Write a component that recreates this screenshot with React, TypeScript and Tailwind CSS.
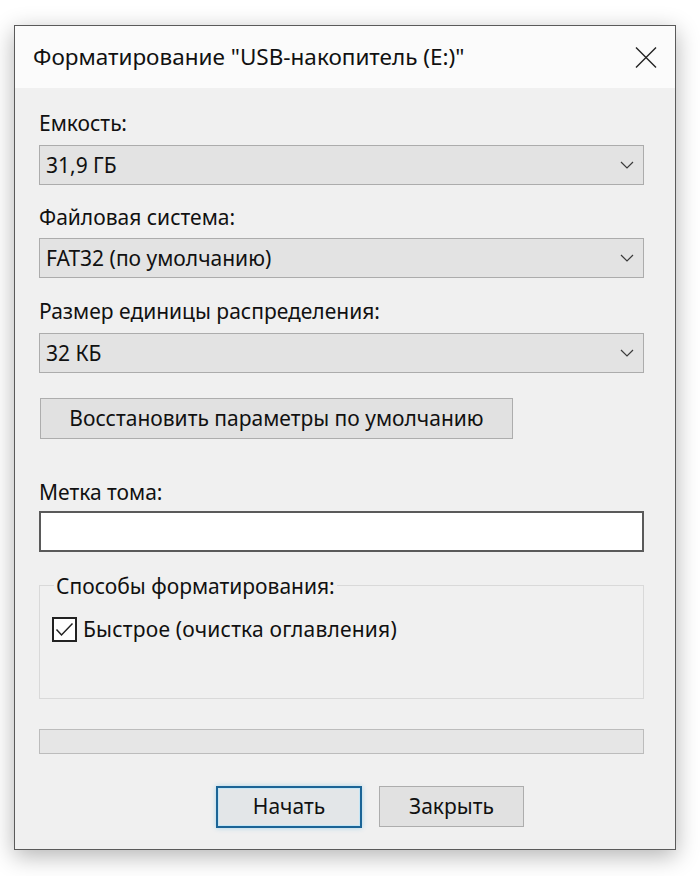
import React, { useState } from 'react';

const font = { fontFamily: '"Noto Sans", "DejaVu Sans", sans-serif' };

function Chevron() {
  return (
    <svg width="14" height="8" viewBox="0 0 14 8" fill="none">
      <path d="M1 1 L7 7 L13 1" stroke="#3a3a3a" strokeWidth="1.2" />
    </svg>
  );
}

function Combo({ value }: { value: string }) {
  return (
    <div className="h-[40px] w-full border border-[#acacac] bg-[#e3e3e3] flex items-center justify-between pl-[6px] pr-[9px]">
      <span className="text-[21px] leading-none text-[#111]">{value}</span>
      <Chevron />
    </div>
  );
}

function Label({ text, className }: { text: string; className: string }) {
  return <div className={`h-[26px] leading-[26px] text-[21px] text-[#111] ${className}`}>{text}</div>;
}

export default function App() {
  const [quick, setQuick] = useState(true);

  return (
    <div className="w-[700px] h-[876px] bg-white pt-[25px] pl-[14px]" style={font}>
      <div className="w-[662px] h-[825px] border border-[#5a5a5a] flex flex-col shadow-[0_6px_22px_rgba(0,0,0,0.3)]">
        {/* title bar */}
        <div className="h-[62px] bg-[#fbfbfb] flex items-center justify-between pl-[18px] pr-[18px]">
          <span className="text-[22.5px] text-[#111]">Форматирование "USB-накопитель (E:)"</span>
          <svg width="22" height="21" viewBox="0 0 22 21" fill="none">
            <path d="M1 0.5 L21 20.5 M21 0.5 L1 20.5" stroke="#222" strokeWidth="1.4" />
          </svg>
        </div>

        {/* body */}
        <div className="flex-1 bg-[#f0f0f0] pl-[24px] pr-[31px] flex flex-col">
          <Label text="Емкость:" className="mt-[22px]" />
          <div className="mt-[9px]"><Combo value="31,9 ГБ" /></div>

          <Label text="Файловая система:" className="mt-[19px]" />
          <div className="mt-[8px]"><Combo value="FAT32 (по умолчанию)" /></div>

          <Label text="Размер единицы распределения:" className="mt-[20px]" />
          <div className="mt-[9px]"><Combo value="32 КБ" /></div>

          <button className="mt-[25px] ml-[1px] w-[473px] h-[41px] border border-[#adadad] bg-[#e1e1e1] text-[21px] text-[#111]">
            Восстановить параметры по умолчанию
          </button>

          <Label text="Метка тома:" className="mt-[40px]" />
          <div className="mt-[6px] h-[41px] w-full border-2 border-[#5a5a5a] bg-white" />

          {/* group box */}
          <div className="relative mt-[33px] h-[114px] border border-[#d9d9d9] pt-[31px] pl-[12px]">
            <div className="absolute -top-[13px] left-[14px] bg-[#f0f0f0] px-[2px] h-[26px] leading-[26px] text-[21px] text-[#111]">
              Способы форматирования:
            </div>
            <label className="flex items-center gap-[6px] cursor-default" onClick={() => setQuick(!quick)}>
              <span className="w-[25px] h-[25px] border-2 border-[#222] bg-white flex items-center justify-center">
                {quick && (
                  <svg width="19" height="15" viewBox="0 0 19 15" fill="none">
                    <path d="M1.5 7.5 L6.5 13 L17.5 1.5" stroke="#222" strokeWidth="1.5" />
                  </svg>
                )}
              </span>
              <span className="text-[21px] leading-none text-[#111] tracking-[0.2px]">Быстрое (очистка оглавления)</span>
            </label>
          </div>

          {/* progress */}
          <div className="mt-[30px] h-[25px] w-full border border-[#bcbcbc] bg-[#e6e6e6]" />

          {/* buttons */}
          <div className="mt-[32px] flex gap-[17px] pl-[177px]">
            <button className="w-[146px] h-[42px] border-2 border-[#1b6496] bg-[#e3e6e8] text-[21px] text-[#111] shadow-[inset_0_0_0_1px_#c4e6f6,0_0_5px_rgba(0,150,220,0.3)]">
              Начать
            </button>
            <button className="w-[145px] h-[41px] border border-[#adadad] bg-[#e1e1e1] text-[21px] text-[#111]">
              Закрыть
            </button>
          </div>
        </div>
      </div>
    </div>
  );
}
